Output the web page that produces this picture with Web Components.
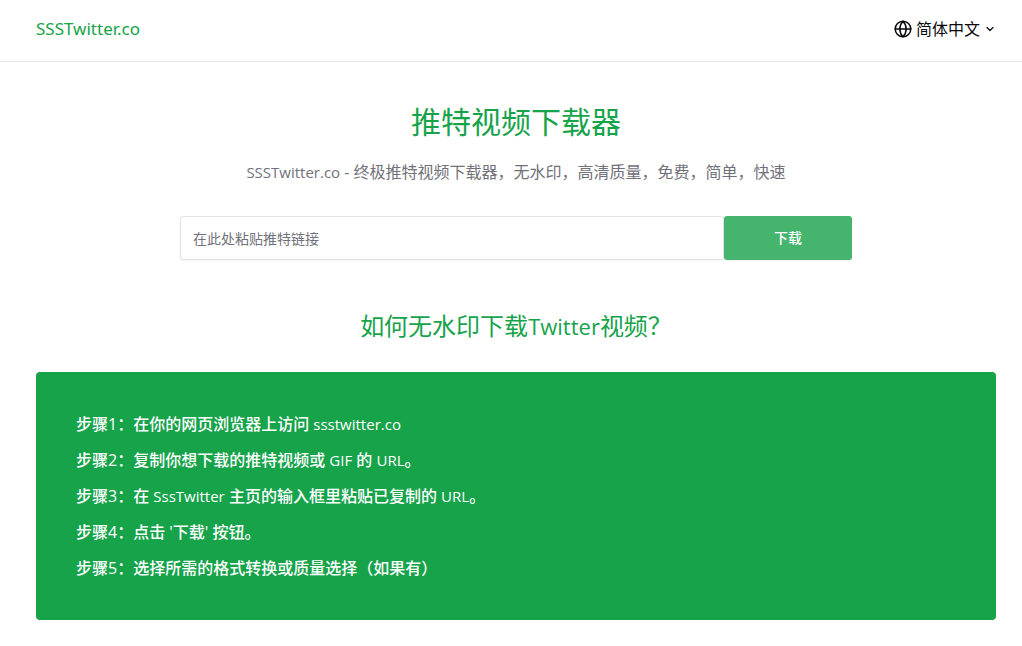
<!DOCTYPE html>
<html lang="zh-CN">
<head>
<meta charset="utf-8">
<meta name="viewport" content="width=device-width, initial-scale=1">
<title>SSSTwitter.co</title>
<style>
  :root { --green: #16a34a; --gray: #71717a; --line: #e4e4e7; }
  body { margin: 0; background: #fff; color: #09090b; font: 16px/24px "Open Sans", "Noto Sans CJK SC", sans-serif; }
  step-item span { font-size: 15px; }
  how-to h2 span { font-size: 22px; }
</style>
</head>
<body>
<site-header></site-header>
<main>
  <download-hero></download-hero>
  <how-to>
    <h2 slot="heading">如何无水印下载<span>Twitter</span>视频？</h2>
    <step-item>步骤1：在你的网页浏览器上访问 <span>ssstwitter.co</span></step-item>
    <step-item>步骤2：复制你想下载的推特视频或 <span>GIF</span> 的 <span>URL</span>。</step-item>
    <step-item>步骤3：在 <span>SssTwitter</span> 主页的输入框里粘贴已复制的 <span>URL</span>。</step-item>
    <step-item>步骤4：点击 '下载' 按钮。</step-item>
    <step-item>步骤5：选择所需的格式转换或质量选择（如果有）</step-item>
  </how-to>
</main>
<script>
const define = (name, html) => customElements.define(name, class extends HTMLElement {
  constructor() {
    super();
    this.attachShadow({ mode: "open" }).innerHTML = html;
  }
});

define("site-header", `
<style>
  :host { display: block; border-bottom: 1px solid var(--line); }
  header { display: flex; align-items: center; justify-content: space-between; padding: 15px 26px 18px 36px; }
  a { color: var(--green); text-decoration: none; font: 17px/28px "Noto Sans", sans-serif; }
</style>
<header><a href="#">SSSTwitter.co</a><language-picker></language-picker></header>`);

define("language-picker", `
<style>
  :host { display: block; }
  button { display: flex; align-items: center; gap: 4px; border: 0; padding: 0; background: none; color: inherit; font: inherit; cursor: pointer; }
  svg { display: block; fill: none; stroke: currentColor; stroke-linecap: round; stroke-linejoin: round; }
</style>
<button type="button" aria-haspopup="listbox">
  <svg width="18" height="18" viewBox="0 0 18 18" stroke-width="1.5"><circle cx="9" cy="9" r="7.8"/><path d="M1.2 9h15.6M9 1.2c4.2 4.2 4.2 11.4 0 15.6M9 1.2c-4.2 4.2-4.2 11.4 0 15.6"/></svg>
  <span>简体中文</span>
  <svg width="12" height="12" viewBox="0 0 12 12" stroke-width="1.2"><path d="M3 4.5l3 3 3-3"/></svg>
</button>`);

define("download-hero", `
<style>
  :host { display: block; padding: 40px 26px 0 36px; text-align: center; }
  h1 { margin: 0; color: var(--green); font-size: 30px; line-height: 40px; font-weight: 400; }
  p { margin: 18px 0 32px; color: var(--gray); }
  p span { font-size: 15px; }
</style>
<h1>推特视频下载器</h1>
<p><span>SSSTwitter.co</span> - 终极推特视频下载器，无水印，高清质量，免费，简单，快速</p>
<link-form></link-form>`);

define("link-form", `
<style>
  :host { display: block; max-width: 672px; margin: 0 auto; }
  form { display: flex; }
  input, button { box-sizing: border-box; height: 44px; border-radius: 3px; font: inherit; font-size: 14px; }
  input { flex: 1; min-width: 0; border: 1px solid var(--line); padding: 0 12px; color: inherit; background: #fff; box-shadow: 0 1px 2px #0000000d; }
  input::placeholder { color: var(--gray); opacity: 1; }
  button { width: 128px; border: 0; background: #45b56d; color: #fff; font-weight: 500; box-shadow: 0 1px 2px #0000000d; }
</style>
<form onsubmit="return false">
  <input type="url" aria-label="推特链接" placeholder="在此处粘贴推特链接">
  <button type="submit">下载</button>
</form>`);

define("how-to", `
<style>
  :host { display: block; padding: 48px 26px 26px 36px; }
  ::slotted(h2) { margin: 0 0 28px; text-align: center; color: var(--green); font-size: 24px; line-height: 36px; font-weight: 400; }
  section { display: grid; gap: 12px; padding: 40px; border-radius: 4px; background: var(--green); color: #fff; }
</style>
<slot name="heading"></slot>
<section><slot></slot></section>`);

define("step-item", `
<style>
  :host { display: block; font-size: 16px; font-weight: 500; }
</style>
<slot></slot>`);
</script>
</body>
</html>
